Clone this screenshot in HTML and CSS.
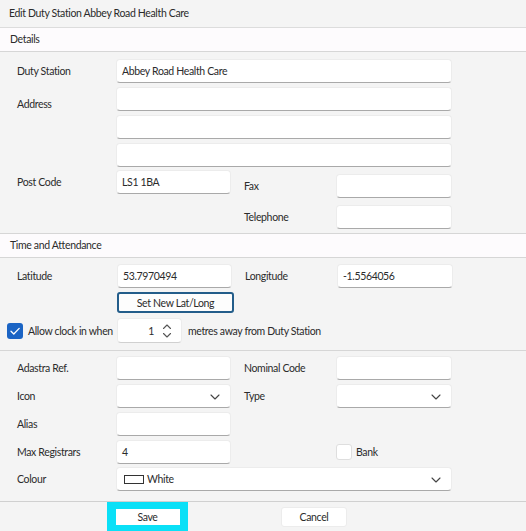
FILE: index.html
```html
<!DOCTYPE html>
<html>
<head>
<meta charset="utf-8">
<link rel="stylesheet" href="styles.css">
</head>
<body>
<div class="dialog">
  <div class="title">Edit Duty Station Abbey Road Health Care</div>
  <div class="section-head">Details</div>
  <div class="details">
    <div class="row">
      <label class="lbl">Duty Station</label>
      <div class="input wide">Abbey Road Health Care</div>
    </div>
    <div class="row addr">
      <label class="lbl lbl-addr">Address</label>
      <div class="stack">
        <div class="input wide"></div>
        <div class="input wide"></div>
        <div class="input wide"></div>
      </div>
    </div>
    <div class="row post">
      <div class="post-left">
        <label class="lbl">Post Code</label>
        <div class="input short">LS1 1BA</div>
      </div>
      <div class="post-right">
        <div class="sub fax">
          <label class="lbl2">Fax</label>
          <div class="input short2"></div>
        </div>
        <div class="sub tel">
          <label class="lbl2">Telephone</label>
          <div class="input short2"></div>
        </div>
      </div>
    </div>
  </div>
  <div class="section-head">Time and Attendance</div>
  <div class="ta">
    <div class="row latrow">
      <label class="lbl">Latitude</label>
      <div class="input short lat">53.7970494</div>
      <label class="lbl2 lonlbl">Longitude</label>
      <div class="input short2 lon">-1.5564056</div>
    </div>
    <div class="btnrow">
      <button class="setbtn">Set New Lat/Long</button>
    </div>
    <div class="clockrow">
      <span class="check on">
        <svg width="16" height="16" viewBox="0 0 16 16"><path d="M4 8.2 L6.8 11 L12.2 5.4" fill="none" stroke="#fff" stroke-width="1.3" stroke-linecap="round" stroke-linejoin="round"/></svg>
      </span>
      <span class="clocklbl">Allow clock in when</span>
      <div class="spin">
        <span class="spinval">1</span>
        <svg class="arrows" width="10" height="16" viewBox="0 0 10 16"><path d="M1.5 5.5 L5 2 L8.5 5.5 M1.5 10.5 L5 14 L8.5 10.5" fill="none" stroke="#555" stroke-width="1.1" stroke-linecap="round" stroke-linejoin="round"/></svg>
      </div>
      <span class="metres">metres away from Duty Station</span>
    </div>
  </div>
  <div class="misc">
    <div class="row">
      <label class="lbl">Adastra Ref.</label>
      <div class="input short"></div>
      <label class="lbl2">Nominal Code</label>
      <div class="input short2"></div>
    </div>
    <div class="row">
      <label class="lbl">Icon</label>
      <div class="input short select"><svg class="chev" width="10" height="6" viewBox="0 0 10 6"><path d="M1 1 L5 5 L9 1" fill="none" stroke="#444" stroke-width="1.1" stroke-linecap="round" stroke-linejoin="round"/></svg></div>
      <label class="lbl2">Type</label>
      <div class="input short2 select"><svg class="chev" width="10" height="6" viewBox="0 0 10 6"><path d="M1 1 L5 5 L9 1" fill="none" stroke="#444" stroke-width="1.1" stroke-linecap="round" stroke-linejoin="round"/></svg></div>
    </div>
    <div class="row">
      <label class="lbl">Alias</label>
      <div class="input short"></div>
    </div>
    <div class="row">
      <label class="lbl">Max Registrars</label>
      <div class="input short">4</div>
      <span class="lbl2"></span>
      <span class="check off"></span>
      <span class="banklbl">Bank</span>
    </div>
    <div class="row colourrow">
      <label class="lbl">Colour</label>
      <div class="input wide select"><span class="swatch"></span>White<svg class="chev" width="10" height="6" viewBox="0 0 10 6"><path d="M1 1 L5 5 L9 1" fill="none" stroke="#444" stroke-width="1.1" stroke-linecap="round" stroke-linejoin="round"/></svg></div>
    </div>
  </div>
  <div class="footer">
    <div class="savebox"><button class="savebtn">Save</button></div>
    <button class="cancelbtn">Cancel</button>
  </div>
</div>
</body>
</html>
```
FILE: styles.css
```css
html, body {
  margin: 0;
  padding: 0;
  background: #f4f4f4;
}
body {
  font-family: "Lato", "Open Sans", sans-serif;
  font-size: 10.5px;
  letter-spacing: -0.35px;
  color: #2b2b2b;
}
.dialog {
  width: 526px;
  height: 531px;
  overflow: hidden;
}
.title {
  height: 28px;
  line-height: 27px;
  padding-left: 9px;
  border-bottom: 1px solid #dcdcdc;
  box-sizing: border-box;
}
.section-head {
  height: 24px;
  line-height: 23px;
  padding-left: 10px;
  background: #fdfbfd;
  border-bottom: 1px solid #d6d6d6;
  box-sizing: border-box;
}
.details {
  padding: 7px 0 4px 0;
  border-bottom: 1px solid #d6d6d6;
}
.row {
  display: flex;
  align-items: center;
  height: 24px;
  margin-bottom: 4px;
}
.lbl {
  width: 99px;
  padding-left: 17px;
  flex: none;
  white-space: nowrap;
}
.lbl2 {
  width: 92px;
  margin-left: 13px;
  flex: none;
  white-space: nowrap;
}
.input {
  height: 24px;
  box-sizing: border-box;
  background: #fff;
  border-radius: 4px;
  border: 1px solid #ececec;
  border-bottom: 1px solid #a9a9a9;
  padding-left: 5px;
  display: flex;
  align-items: center;
  flex: none;
  position: relative;
}
.wide { width: 336px; }
.short { width: 115px; }
.short2 { width: 116px; }
.row.addr {
  height: auto;
  align-items: flex-start;
}
.lbl-addr {
  padding-top: 11px;
}
.stack {
  display: flex;
  flex-direction: column;
  gap: 4px;
}
.row.post {
  height: auto;
  align-items: flex-start;
  margin-bottom: 0;
}
.post-left {
  display: flex;
  align-items: center;
  margin-top: -1px;
}
.post-right {
  display: flex;
  flex-direction: column;
}
.sub {
  display: flex;
  align-items: center;
}
.sub.fax { margin-top: 3px; }
.sub.tel { margin-top: 7px; }
.ta {
  padding-top: 6px;
  border-bottom: 1px solid #d6d6d6;
  height: 93px;
  box-sizing: border-box;
}
.latrow .lat { margin-left: 1px; }
.latrow .lonlbl { margin-left: 13px; }
.btnrow {
  padding-left: 117px;
  margin-top: 2px;
}
.setbtn {
  width: 117px;
  height: 21px;
  box-sizing: border-box;
  border: 2px solid #235d8a;
  border-radius: 3px;
  background: #fdfdfd;
  font: inherit;
  letter-spacing: inherit;
  color: #2b2b2b;
  padding: 0;
}
.clockrow {
  display: flex;
  align-items: center;
  margin-top: 5px;
  height: 25px;
}
.check {
  width: 16px;
  height: 16px;
  border-radius: 3px;
  box-sizing: border-box;
  display: inline-block;
  flex: none;
}
.check.on {
  background: #1b64c4;
  margin-left: 7px;
}
.check.on svg { display: block; }
.clocklbl {
  margin-left: 5px;
  width: 89px;
  flex: none;
  white-space: nowrap;
}
.spin {
  width: 65px;
  height: 25px;
  flex: none;
  box-sizing: border-box;
  background: #fff;
  border-radius: 4px;
  border: 1px solid #ececec;
  border-bottom: 1px solid #d0d0d0;
  display: flex;
  align-items: center;
  justify-content: flex-end;
  padding-right: 9px;
}
.spinval { margin-right: 8px; }
.arrows { display: block; }
.metres { margin-left: 6px; white-space: nowrap; }
.misc {
  padding-top: 5px;
  height: 151px;
  box-sizing: border-box;
  border-bottom: 1px solid #d0d0d0;
}
.select .chev {
  position: absolute;
  right: 10px;
  top: 9px;
}
.check.off {
  background: #fff;
  border: 1px solid #dedede;
}
.banklbl { margin-left: 4px; }
.swatch {
  width: 20px;
  height: 9px;
  border: 1px solid #333;
  box-sizing: border-box;
  margin-left: 2px;
  margin-right: 3px;
}
.colourrow { margin-top: -1px; }
.footer {
  display: flex;
  align-items: flex-start;
  height: 30px;
}
.savebox {
  margin-left: 107px;
  width: 81px;
  height: 29px;
  background: #0ae0f7;
  display: flex;
  align-items: center;
  justify-content: center;
  box-sizing: border-box;
}
.savebtn {
  width: 64px;
  height: 16px;
  border: none;
  background: #fff;
  font: inherit;
  letter-spacing: inherit;
  color: #2b2b2b;
  padding: 0;
}
.cancelbtn {
  margin-left: 93px;
  margin-top: 5px;
  width: 66px;
  height: 20px;
  border: 1px solid #ececec;
  border-radius: 3px;
  background: #fff;
  font: inherit;
  letter-spacing: inherit;
  color: #2b2b2b;
  padding: 0;
}
```
